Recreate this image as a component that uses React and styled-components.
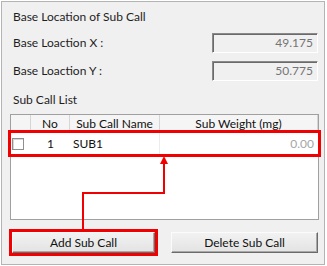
import React from "react";
import styled, { createGlobalStyle } from "styled-components";

const font = `Lato, "Liberation Sans", Arial, sans-serif`;

const GlobalStyle = createGlobalStyle`
  html, body {
    margin: 0;
    padding: 0;
    background: #ffffff;
  }
  body {
    font-family: ${font};
    font-size: 12px;
    color: #1e1e1e;
  }
`;

const Panel = styled.div`
  position: relative;
  box-sizing: border-box;
  margin: 1px;
  width: 324px;
  height: 264px;
  border: 1px solid #b4b4b4;
  background: #f0f0f0;
  padding: 0 5px 0 8px;
  display: flex;
  flex-direction: column;
`;

const Caption = styled.div`
  height: 20px;
  line-height: 20px;
  margin-top: ${(p) => p.$top}px;
  padding-left: 3px;
`;

const FieldRow = styled.div`
  height: 20px;
  margin-top: ${(p) => p.$top}px;
  display: flex;
  align-items: center;
  justify-content: space-between;
  padding-right: 1px;
`;

const FieldLabel = styled.span`
  padding-left: 3px;
  margin-top: -1px;
`;

const ReadOnlyBox = styled.div`
  box-sizing: border-box;
  width: 106px;
  height: 20px;
  border: 1px solid;
  border-color: #8a8a8a #ffffff #ffffff #8a8a8a;
  box-shadow: inset 1px 1px 0 #6a6a6a;
  background: #f0f0f0;
  color: #747474;
  text-align: right;
  padding: 0 4px 0 0;
  line-height: 18px;
`;

const Grid = styled.div`
  box-sizing: border-box;
  margin-top: 4px;
  height: 106px;
  border: 1px solid #a0a0a0;
  background: #ffffff;
  display: flex;
  flex-direction: column;
`;

const cols = "20px 39px 90px 1fr";

const HeaderRow = styled.div`
  display: grid;
  grid-template-columns: ${cols};
  height: 17px;
  background: #f5f5f5;
  border-bottom: 1px solid #e0e0e0;
`;

const HeaderCell = styled.div`
  border-right: 1px solid #d5d5d5;
  text-align: center;
  line-height: 17px;
  color: #111;
`;

const DataRow = styled.div`
  display: grid;
  grid-template-columns: ${cols};
  height: 21px;
  outline: 3px solid #f00000;
  outline-offset: 0;
  position: relative;
`;

const Cell = styled.div`
  line-height: 21px;
  padding: ${(p) => p.$pad || "0"};
  color: ${(p) => (p.$muted ? "#a6a6a6" : "#111")};
  border-right: ${(p) => (p.$line ? "1px solid #ececec" : "none")};
  display: flex;
  align-items: center;
  justify-content: ${(p) =>
    p.$align === "right" ? "flex-end" : p.$align === "center" ? "center" : "flex-start"};
`;

const CheckBox = styled.span`
  box-sizing: border-box;
  width: 12px;
  height: 12px;
  border: 1px solid #8f8f8f;
  background: #ffffff;
  box-shadow: inset 1px 1px 0 #d8d8d8;
  margin-left: 1px;
`;

const ButtonRow = styled.div`
  margin-top: 12px;
  display: flex;
  gap: 16px;
  padding: 0 1px 0 2px;
`;

const Button = styled.button`
  box-sizing: border-box;
  height: 21px;
  width: ${(p) => (p.$w ? `${p.$w}px` : "auto")};
  flex: ${(p) => (p.$w ? "none" : "1")};
  font-family: ${font};
  font-size: 12px;
  color: #111;
  padding: 0;
  border: 1px solid;
  border-color: #fbfbfb #6a6a6a #6a6a6a #fbfbfb;
  box-shadow: inset -1px -1px 0 #a8a8a8;
  background: linear-gradient(#f2f2f2, #e3e3e3);
  outline: ${(p) => (p.$marked ? "3px solid #f00000" : "none")};
`;

const Overlay = styled.svg`
  position: absolute;
  left: -1px;
  top: -1px;
  pointer-events: none;
`;

const App = () => {
  return (
    <>
      <GlobalStyle />
      <Panel>
        <Caption $top={5}>Base Location of Sub Call</Caption>
        <FieldRow $top={6}>
          <FieldLabel>Base Loaction X :</FieldLabel>
          <ReadOnlyBox>49.175</ReadOnlyBox>
        </FieldRow>
        <FieldRow $top={8}>
          <FieldLabel>Base Loaction Y :</FieldLabel>
          <ReadOnlyBox>50.775</ReadOnlyBox>
        </FieldRow>
        <Caption $top={9}>Sub Call List</Caption>
        <Grid>
          <HeaderRow>
            <HeaderCell />
            <HeaderCell>No</HeaderCell>
            <HeaderCell>Sub Call Name</HeaderCell>
            <HeaderCell>Sub Weight (mg)</HeaderCell>
          </HeaderRow>
          <DataRow>
            <Cell>
              <CheckBox />
            </Cell>
            <Cell $align="center">1</Cell>
            <Cell $pad="0 0 0 3px" $line>SUB1</Cell>
            <Cell $align="right" $pad="0 4px 0 0" $muted>
              0.00
            </Cell>
          </DataRow>
        </Grid>
        <ButtonRow>
          <Button $w={143} $marked>
            Add Sub Call
          </Button>
          <Button>Delete Sub Call</Button>
        </ButtonRow>
        <Overlay width="327" height="266" viewBox="0 0 327 266">
          <polyline
            points="163,162 163,192 82,192 82,228"
            fill="none"
            stroke="#f00000"
            strokeWidth="2"
          />
          <polygon points="163,155 159,163 167,163" fill="#f00000" />
        </Overlay>
      </Panel>
    </>
  );
};

export default App;
